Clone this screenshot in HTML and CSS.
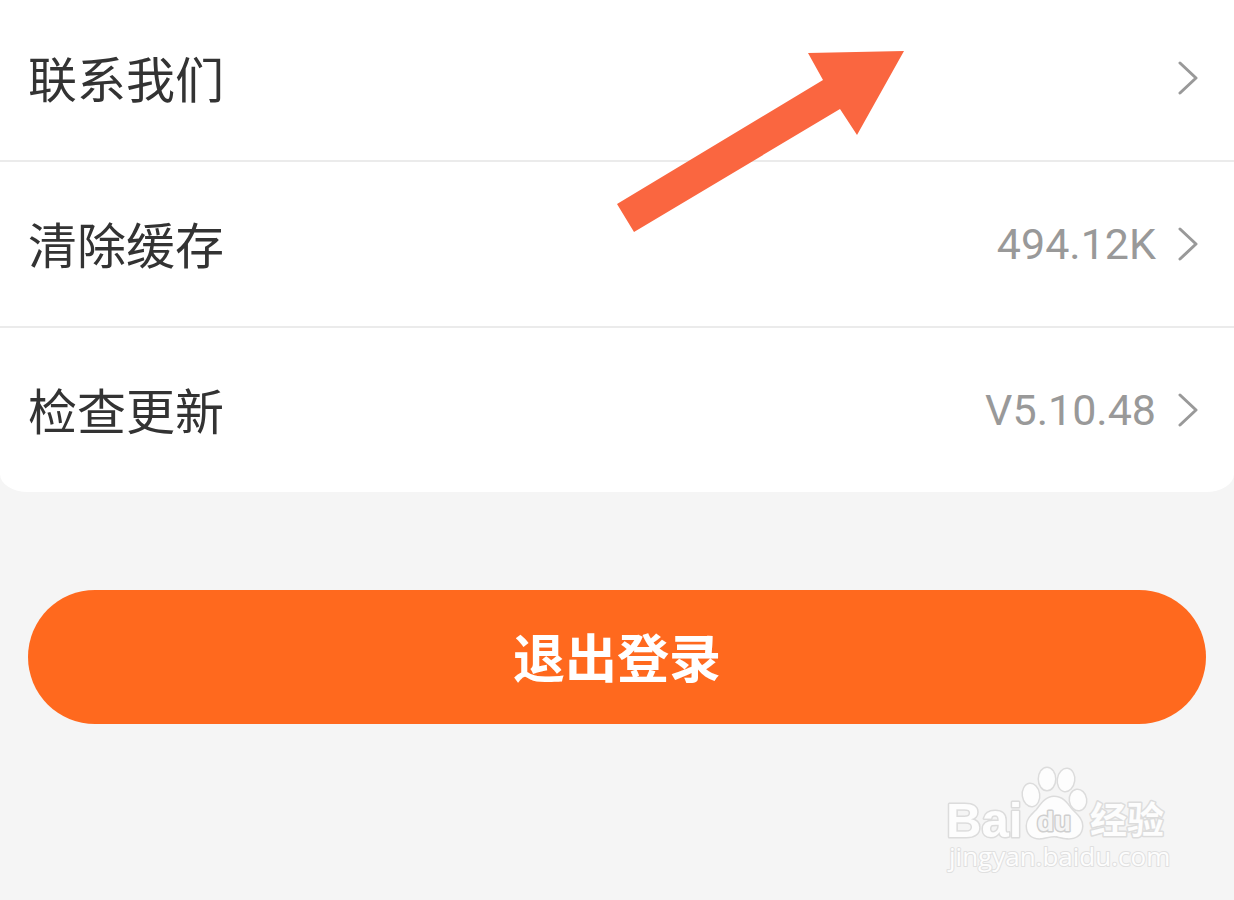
FILE: index.html
```html
<!DOCTYPE html>
<html lang="zh-CN">
<head>
    <meta charset="UTF-8">
    <meta name="viewport" content="width=device-width, initial-scale=1.0">
    <title>设置</title>
    <link rel="stylesheet" href="styles.css">
</head>
<body>
    <main class="page">
        <nav class="card">
            <a class="row" href="#contact">
                <span class="label">联系我们</span>
                <svg class="chevron" viewBox="0 0 20 34" aria-hidden="true"><path d="M2 2 L18 17 L2 32"/></svg>
            </a>
            <a class="row" href="#cache">
                <span class="label">清除缓存</span>
                <span class="value">494.12K</span>
                <svg class="chevron" viewBox="0 0 20 34" aria-hidden="true"><path d="M2 2 L18 17 L2 32"/></svg>
            </a>
            <a class="row" href="#update">
                <span class="label">检查更新</span>
                <span class="value">V5.10.48</span>
                <svg class="chevron" viewBox="0 0 20 34" aria-hidden="true"><path d="M2 2 L18 17 L2 32"/></svg>
            </a>
        </nav>

        <button class="logout" type="button">退出登录</button>

        <footer class="footer">
            <svg class="watermark" viewBox="0 0 230 115" role="img" aria-label="Baidu 经验">
                <g class="outline">
                    <text class="brand" x="2" y="77">Bai</text>
                    <ellipse cx="87" cy="35" rx="8" ry="11" transform="rotate(-8 87 35)"/>
                    <ellipse cx="103" cy="19" rx="8" ry="11"/>
                    <ellipse cx="122" cy="20" rx="8" ry="11" transform="rotate(8 122 20)"/>
                    <ellipse cx="134" cy="40" rx="8" ry="10" transform="rotate(-8 134 40)"/>
                    <path d="M110 37 C118 37 122 42 127 49 C133 55 138 59 138 66 C138 75 131 79 122 78 C116 77 113 76 110 76 C106 76 103 77 98 78 C88 79 83 74 83 66 C83 59 88 55 93 50 C99 42 103 37 110 37 Z"/>
                    <text class="brand-inner" x="93" y="71">du</text>
                    <text class="topic" x="146" y="74">经验</text>
                </g>
                <text class="site" x="5" y="106">jingyan.baidu.com</text>
            </svg>
        </footer>

        <svg class="pointer" viewBox="0 0 287 182" aria-hidden="true">
            <polygon points="0,154 17,182 223,59 240,85 287,1 191,3 206,30"/>
        </svg>
    </main>
</body>
</html>
```
FILE: styles.css
```css
* {
    box-sizing: border-box;
}

body {
    margin: 0;
    background-color: #f5f5f5;
    font-family: Roboto, "Noto Sans CJK SC", sans-serif;
}

.page {
    position: relative;
    min-height: 100vh;
    overflow: hidden;
}

/* the list starts a little above the visible area */
.card {
    margin-top: -4px;
    background-color: #fff;
    border-radius: 0 0 28px 28px / 0 0 18px 18px;
}

.row {
    display: flex;
    align-items: center;
    min-height: 164px;
    padding: 0 36px 0 28px;
    color: #333;
    text-decoration: none;
}

.row + .row {
    min-height: 166px;
    border-top: 2px solid #ebebeb;
}

.label {
    flex: 1;
    padding-bottom: 2px;
    font-family: "Noto Sans CJK SC", sans-serif;
    font-size: 49px;
    line-height: 72px;
}

.value {
    margin-right: 22px;
    color: #999;
    font-size: 43px;
    line-height: 56px;
}

.chevron {
    width: 20px;
    height: 34px;
    fill: none;
    stroke: #999;
    stroke-width: 3;
    stroke-linecap: round;
    stroke-linejoin: round;
}

.logout {
    display: block;
    width: calc(100% - 56px);
    height: 134px;
    margin: 98px auto 0;
    padding: 0 0 4px;
    border: none;
    border-radius: 67px;
    background-color: #ff691e;
    color: #fff;
    font-family: "Noto Sans CJK SC", sans-serif;
    font-size: 52px;
    font-weight: bold;
    cursor: pointer;
}

.footer {
    display: flex;
    justify-content: flex-end;
    padding: 36px 60px 0 0;
}

.watermark {
    width: 230px;
    height: 115px;
    overflow: visible;
}

.outline {
    fill: #fdfdfd;
    stroke: #dcdcdc;
    stroke-width: 3;
    stroke-linejoin: round;
    paint-order: stroke;
}

.brand {
    font: bold 49px "Liberation Sans", sans-serif;
}

.brand-inner {
    font: bold 28px "Liberation Sans", sans-serif;
    fill: #f5f5f5;
    stroke: #cfcfcf;
}

.topic {
    font: bold 37px "Noto Sans CJK SC", sans-serif;
}

.site {
    font: 26px "Open Sans", sans-serif;
    fill: #fdfdfd;
    stroke: #e0e0e0;
    stroke-width: 2;
    stroke-linejoin: round;
    paint-order: stroke;
}

.pointer {
    position: absolute;
    top: 50px;
    left: 50%;
    width: 287px;
    height: 182px;
    fill: #fa6640;
    pointer-events: none;
}
```
